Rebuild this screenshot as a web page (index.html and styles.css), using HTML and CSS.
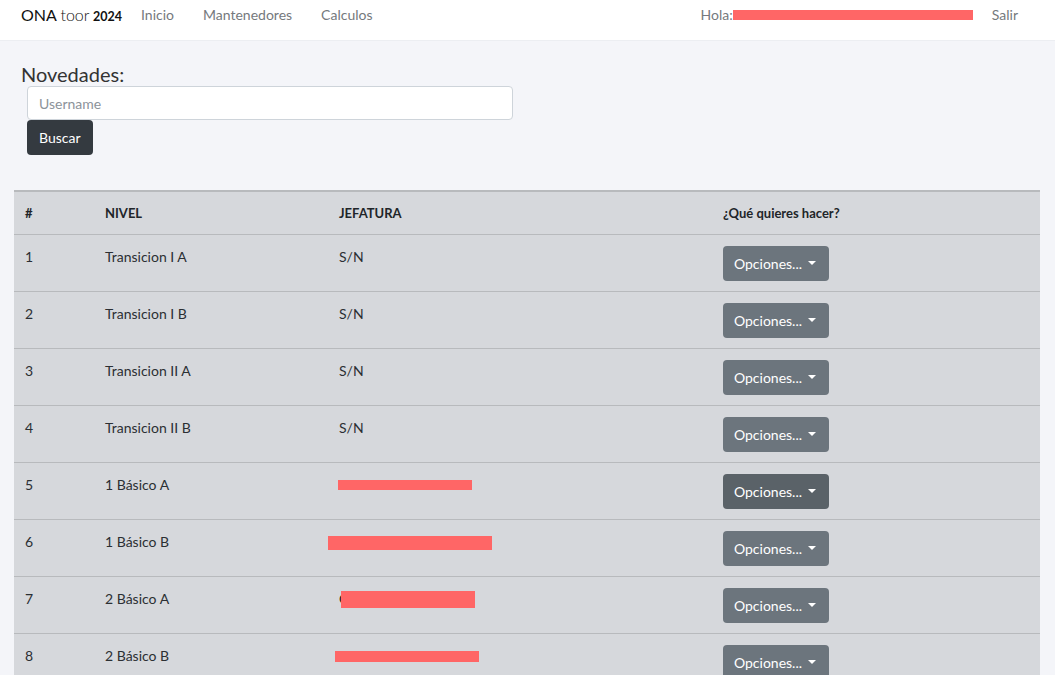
FILE: index.html
```html
<!DOCTYPE html>
<html lang="es">
<head>
<meta charset="utf-8">
<title>ONA toor 2024</title>
<link rel="stylesheet" href="styles.css">
</head>
<body>
<nav class="navbar">
  <div class="brand"><span class="b-ona">ONA</span> <span class="b-toor">toor</span> <span class="b-year">2024</span></div>
  <ul class="nav-links">
    <li>Inicio</li>
    <li>Mantenedores</li>
    <li>Calculos</li>
  </ul>
  <div class="nav-right">
    <span class="hola">Hola:<span class="redact redact-user"></span></span>
    <span class="salir">Salir</span>
  </div>
</nav>

<main class="content">
  <h2 class="title">Novedades:</h2>
  <form class="search">
    <input class="input" type="text" placeholder="Username">
    <button class="btn-dark" type="button">Buscar</button>
  </form>

  <table class="tbl">
    <colgroup>
      <col class="c1"><col class="c2"><col class="c3"><col class="c4">
    </colgroup>
    <thead>
      <tr><th>#</th><th>NIVEL</th><th>JEFATURA</th><th>¿Qué quieres hacer?</th></tr>
    </thead>
    <tbody>
      <tr><td>1</td><td>Transicion I A</td><td>S/N</td><td><button class="btn-opt">Opciones... <span class="caret"></span></button></td></tr>
      <tr><td>2</td><td>Transicion I B</td><td>S/N</td><td><button class="btn-opt">Opciones... <span class="caret"></span></button></td></tr>
      <tr><td>3</td><td>Transicion II A</td><td>S/N</td><td><button class="btn-opt">Opciones... <span class="caret"></span></button></td></tr>
      <tr><td>4</td><td>Transicion II B</td><td>S/N</td><td><button class="btn-opt">Opciones... <span class="caret"></span></button></td></tr>
      <tr><td>5</td><td>1 Básico A</td><td><span class="redact r5"></span></td><td><button class="btn-opt hover">Opciones... <span class="caret"></span></button></td></tr>
      <tr><td>6</td><td>1 Básico B</td><td><span class="redact r6"></span></td><td><button class="btn-opt">Opciones... <span class="caret"></span></button></td></tr>
      <tr><td>7</td><td>2 Básico A</td><td><span class="peek">C</span><span class="redact r7"></span></td><td><button class="btn-opt">Opciones... <span class="caret"></span></button></td></tr>
      <tr><td>8</td><td>2 Básico B</td><td><span class="redact r8"></span></td><td><button class="btn-opt">Opciones... <span class="caret"></span></button></td></tr>
    </tbody>
  </table>
</main>
</body>
</html>
```

FILE: styles.css
```css
* { box-sizing: border-box; }
html, body { margin: 0; padding: 0; }
body {
  background: #f4f5f9;
  font-family: "Lato", "Liberation Sans", sans-serif;
  color: #212529;
  font-size: 14px;
  overflow: hidden;
}

.navbar {
  height: 41px;
  background: #ffffff;
  border-bottom: 1px solid #eceef2;
  display: flex;
  align-items: flex-start;
  padding: 5px 37px 0 21px;
  line-height: 20px;
}
.brand { color: #111; margin-right: 19px; white-space: nowrap; }
.b-ona { font-size: 16px; }
.b-toor { font-size: 16px; font-weight: 300; }
.b-year { font-size: 12.5px; font-weight: 700; }
.nav-links {
  list-style: none;
  margin: 0;
  padding: 0;
  display: flex;
  gap: 29px;
  color: #75797d;
  font-size: 14px;
}
.nav-right {
  margin-left: auto;
  display: flex;
  align-items: center;
  gap: 19px;
  color: #75797d;
}
.hola { display: flex; align-items: center; }
.redact { display: inline-block; background: #ff6666; }
.redact-user { width: 240px; height: 10px; margin-left: 0; margin-top: -1px; }

.content { padding: 0 14px; }
.title {
  margin: 0;
  padding: 21px 0 0 7px;
  font-size: 20px;
  font-weight: 400;
  color: #333;
  line-height: 24px;
}
.search { padding-left: 13px; display: flex; flex-direction: column; align-items: flex-start; }
.input {
  width: 486px;
  height: 34px;
  border: 1px solid #ced4da;
  border-radius: 4px;
  background: #fff;
  padding: 0 11px;
  font-family: inherit;
  font-size: 14px;
  color: #495057;
}
.input::placeholder { color: #8c939a; }
.btn-dark {
  height: 35px;
  padding: 0 12px;
  background: #343a40;
  color: #fff;
  border: none;
  border-radius: 4px;
  font-family: inherit;
  font-size: 14px;
}

.tbl {
  margin-top: 35px;
  width: 1026px;
  border-collapse: collapse;
  background: #d6d8dc;
  table-layout: fixed;
}
.c1 { width: 80px; }
.c2 { width: 234px; }
.c3 { width: 384px; }
.c4 { width: 328px; }
.tbl th, .tbl td {
  text-align: left;
  vertical-align: top;
  padding: 0 11px;
}
.tbl thead tr { height: 43px; }
.tbl thead th {
  border-top: 2px solid #b8babd;
  border-bottom: 1px solid #b8babd;
  font-weight: 700;
  font-size: 13px;
  color: #212529;
  vertical-align: middle;
}
.tbl tbody td {
  height: 57px;
  padding-top: 13px;
  border-bottom: 1px solid #b8babd;
  font-size: 14px;
  color: #2b2f33;
}
.tbl tbody td:last-child { padding-top: 11px; }
.btn-opt {
  height: 35px;
  width: 106px;
  background: #6c757d;
  color: #fff;
  border: none;
  border-radius: 4px;
  font-family: inherit;
  font-size: 14px;
  padding: 0 2px 0 0;
  display: inline-flex;
  align-items: center;
  justify-content: center;
  gap: 4px;
}
.btn-opt.hover { background: #5a6268; }
.caret {
  width: 0; height: 0;
  border-left: 4px solid transparent;
  border-right: 4px solid transparent;
  border-top: 4px solid #fff;
  margin-left: 2px;
}
.peek { color: #222; }
.r5 { width: 134px; height: 10px; margin-left: -1px; margin-top: -1px; }
.r6 { width: 164px; height: 14px; margin-left: -11px; margin-top: 3px; }
.r7 { width: 134px; height: 17px; margin-left: -7px; margin-top: -1px; vertical-align: top; position: relative; top: 2px; }
.r8 { width: 144px; height: 11px; margin-left: -4px; margin-top: 4px; }
```
